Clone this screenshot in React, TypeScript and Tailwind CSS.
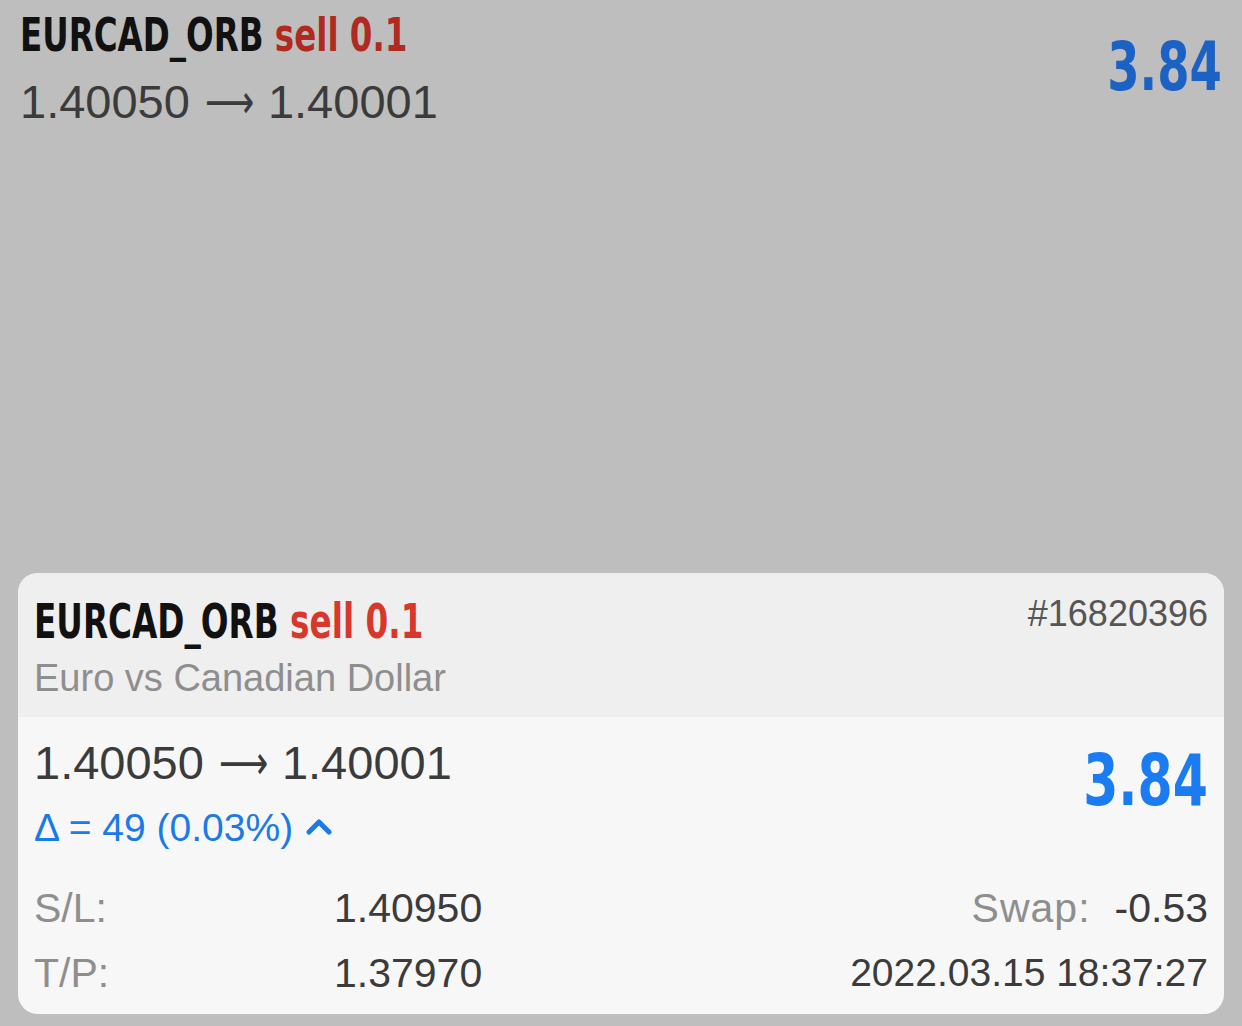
import React from "react";

const cond = "font-['DejaVu_Sans_Condensed','DejaVu_Sans',sans-serif]";
const helv = "font-['Liberation_Sans','Helvetica',Arial,sans-serif]";

function Arrow() {
  return (
    <span className="inline-block w-[45px] ml-[15px] mr-[18px] overflow-visible">
      <span className="inline-block font-['DejaVu_Sans',sans-serif] origin-left scale-x-[0.73]">⟶</span>
    </span>
  );
}

export default function App() {
  return (
    <div className={`w-[1242px] h-[1026px] bg-[#bebebe] flex flex-col ${helv}`}>
      <div className="flex-1 flex justify-between pl-[20px] pr-[20px]">
        <div className="flex flex-col">
          <div className={`${cond} font-bold text-[46px] leading-[46px] mt-[12px] whitespace-nowrap origin-left scale-x-[0.786]`}>
            <span className="text-[#111]">EURCAD_ORB </span>
            <span className="text-[#b02a22]">sell 0.1</span>
          </div>
          <div className="text-[47px] leading-[47px] mt-[20px] text-[#3b3b3b] whitespace-nowrap flex items-center">
            <span>1.40050</span><Arrow /><span>1.40001</span>
          </div>
        </div>
        <div className={`${cond} font-bold text-[68px] leading-[68px] mt-[33px] text-[#1c62c4] origin-right scale-x-[0.76]`}>3.84</div>
      </div>
      <div className="mx-[18px] mb-[12px] h-[441px] rounded-[20px] overflow-hidden bg-[#f7f7f7] flex flex-col">
        <div className="h-[144px] bg-[#efefef] flex justify-between px-[16px]">
          <div className="flex flex-col">
            <div className={`${cond} font-bold text-[48px] leading-[48px] mt-[24px] whitespace-nowrap origin-left scale-x-[0.757]`}>
              <span className="text-[#111]">EURCAD_ORB </span>
              <span className="text-[#d8382c]">sell 0.1</span>
            </div>
            <div className="text-[38px] leading-[38px] mt-[14px] text-[#8e8e8e]">Euro vs Canadian Dollar</div>
          </div>
          <div className="text-[36px] leading-[36px] mt-[23px] text-[#555]">#16820396</div>
        </div>
        <div className="flex-1 flex flex-col px-[16px]">
          <div className="flex justify-between">
            <div className="flex flex-col">
              <div className="text-[47px] leading-[47px] mt-[22px] text-[#3b3b3b] whitespace-nowrap flex items-center">
                <span>1.40050</span><Arrow /><span>1.40001</span>
              </div>
              <div className="flex items-center mt-[22px] text-[39px] leading-[39px] text-[#1a7ae6]">
                <span>Δ = 49 (0.03%)</span>
                <svg className="ml-[13px] mt-[-4px]" width="26" height="18" viewBox="0 0 26 18">
                  <path d="M3 15 L13 5 L23 15" fill="none" stroke="#1a7ae6" strokeWidth="5" strokeLinecap="round" strokeLinejoin="round" />
                </svg>
              </div>
            </div>
            <div className={`${cond} font-bold text-[72px] leading-[72px] mt-[27px] text-[#1a7cf0] origin-right scale-x-[0.78]`}>3.84</div>
          </div>
          <div className="mt-[41px] grid grid-cols-[300px_1fr_auto] text-[41px] leading-[40px] gap-y-[25px] items-center">
            <div className="text-[#8e8e8e]">S/L:</div>
            <div className="text-[#3b3b3b]">1.40950</div>
            <div className="text-right"><span className="text-[#8e8e8e] tracking-[1px]">Swap:</span><span className="text-[#3b3b3b] ml-[24px]">-0.53</span></div>
            <div className="text-[#8e8e8e]">T/P:</div>
            <div className="text-[#3b3b3b]">1.37970</div>
            <div className="text-right text-[#3b3b3b] text-[39px]">2022.03.15 18:37:27</div>
          </div>
        </div>
      </div>
    </div>
  );
}
